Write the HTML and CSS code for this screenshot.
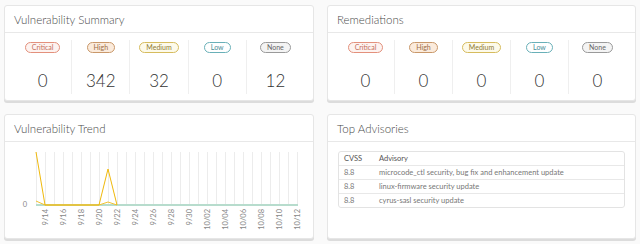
FILE: index.html
```html
<html>
<head>
	<meta http-equiv="content-type" content="text/html;charset=utf-8">
	<title>Dashboard</title>
	<link rel="stylesheet" href="styles.css">
</head>
<body>
	<div class="grid">

		<div class="card">
			<div class="card-header">Vulnerability Summary</div>
			<div class="card-block counts">
				<div class="count"><span class="badge critical">Critical</span><span class="num">0</span></div>
				<div class="count"><span class="badge high">High</span><span class="num">342</span></div>
				<div class="count"><span class="badge medium">Medium</span><span class="num">32</span></div>
				<div class="count"><span class="badge low">Low</span><span class="num">0</span></div>
				<div class="count"><span class="badge none">None</span><span class="num">12</span></div>
			</div>
		</div>

		<div class="card">
			<div class="card-header">Remediations</div>
			<div class="card-block counts">
				<div class="count"><span class="badge critical">Critical</span><span class="num">0</span></div>
				<div class="count"><span class="badge high">High</span><span class="num">0</span></div>
				<div class="count"><span class="badge medium">Medium</span><span class="num">0</span></div>
				<div class="count"><span class="badge low">Low</span><span class="num">0</span></div>
				<div class="count"><span class="badge none">None</span><span class="num">0</span></div>
			</div>
		</div>

		<div class="card">
			<div class="card-header">Vulnerability Trend</div>
			<div class="card-block chart">
				<svg width="308" height="96" viewBox="0 0 308 96" class="trend">
					<g stroke="#ececec" stroke-width="1">
						<line x1="31.5" y1="10" x2="31.5" y2="63"/><line x1="40.5" y1="10" x2="40.5" y2="63"/>
						<line x1="49.5" y1="10" x2="49.5" y2="63"/><line x1="58.5" y1="10" x2="58.5" y2="63"/>
						<line x1="67.5" y1="10" x2="67.5" y2="63"/><line x1="76.5" y1="10" x2="76.5" y2="63"/>
						<line x1="85.5" y1="10" x2="85.5" y2="63"/><line x1="94.5" y1="10" x2="94.5" y2="63"/>
						<line x1="103.5" y1="10" x2="103.5" y2="63"/><line x1="112.5" y1="10" x2="112.5" y2="63"/>
						<line x1="121.5" y1="10" x2="121.5" y2="63"/><line x1="130.5" y1="10" x2="130.5" y2="63"/>
						<line x1="139.5" y1="10" x2="139.5" y2="63"/><line x1="148.5" y1="10" x2="148.5" y2="63"/>
						<line x1="157.5" y1="10" x2="157.5" y2="63"/><line x1="166.5" y1="10" x2="166.5" y2="63"/>
						<line x1="175.5" y1="10" x2="175.5" y2="63"/><line x1="184.5" y1="10" x2="184.5" y2="63"/>
						<line x1="193.5" y1="10" x2="193.5" y2="63"/><line x1="202.5" y1="10" x2="202.5" y2="63"/>
						<line x1="211.5" y1="10" x2="211.5" y2="63"/><line x1="220.5" y1="10" x2="220.5" y2="63"/>
						<line x1="229.5" y1="10" x2="229.5" y2="63"/><line x1="238.5" y1="10" x2="238.5" y2="63"/>
						<line x1="247.5" y1="10" x2="247.5" y2="63"/><line x1="256.5" y1="10" x2="256.5" y2="63"/>
						<line x1="265.5" y1="10" x2="265.5" y2="63"/><line x1="274.5" y1="10" x2="274.5" y2="63"/>
						<line x1="283.5" y1="10" x2="283.5" y2="63"/><line x1="292.5" y1="10" x2="292.5" y2="63"/>
					</g>
					<line x1="31" y1="63" x2="293" y2="63" stroke="#b7dccd" stroke-width="2"/>
					<polyline points="31,59 40,63 94,63 103,60 112,63" fill="none" stroke="#f2c230" stroke-width="1"/>
					<polyline points="31,10 40,63 94,63 103,27 112,63" fill="none" stroke="#f0b90b" stroke-width="1"/>
					<text x="22" y="65" class="axis" text-anchor="end">0</text>
					<g class="axis" text-anchor="end">
						<text transform="translate(43,67) rotate(-90)">9/14</text>
						<text transform="translate(61,67) rotate(-90)">9/16</text>
						<text transform="translate(79,67) rotate(-90)">9/18</text>
						<text transform="translate(97,67) rotate(-90)">9/20</text>
						<text transform="translate(115,67) rotate(-90)">9/22</text>
						<text transform="translate(133,67) rotate(-90)">9/24</text>
						<text transform="translate(151,67) rotate(-90)">9/26</text>
						<text transform="translate(169,67) rotate(-90)">9/28</text>
						<text transform="translate(187,67) rotate(-90)">9/30</text>
						<text transform="translate(205,67) rotate(-90)">10/02</text>
						<text transform="translate(223,67) rotate(-90)">10/04</text>
						<text transform="translate(241,67) rotate(-90)">10/06</text>
						<text transform="translate(259,67) rotate(-90)">10/08</text>
						<text transform="translate(277,67) rotate(-90)">10/10</text>
						<text transform="translate(295,67) rotate(-90)">10/12</text>
					</g>
				</svg>
			</div>
		</div>

		<div class="card">
			<div class="card-header">Top Advisories</div>
			<div class="card-block advisories">
				<table class="datagrid">
					<tr><th class="cvss">CVSS</th><th>Advisory</th></tr>
					<tr><td>8.8</td><td>microcode_ctl security, bug fix and enhancement update</td></tr>
					<tr><td>8.8</td><td>linux-firmware security update</td></tr>
					<tr><td>8.8</td><td>cyrus-sasl security update</td></tr>
				</table>
			</div>
		</div>

	</div>
</body>
</html>
```

FILE: styles.css
```css
body{
	margin:0;
	padding:5px 5px 0 4px;
	background:#fafafa;
	font-family:Lato, "Open Sans", sans-serif;
	color:#565656;
}

.grid{
	display:grid;
	grid-template-columns:310px 309px;
	grid-template-rows:96px 125px;
	column-gap:13px;
	row-gap:13px;
}

.card{
	background:white;
	border:1px solid #e6e6e6;
	border-radius:3px;
	box-shadow:0 2px 0 #dcdcdc;
	display:flex;
	flex-direction:column;
	overflow:hidden;
}
.card-header{
	height:26px;
	line-height:27px;
	padding:0 9px;
	font-size:11.5px;
	font-weight:300;
	color:#4a4a4a;
	border-bottom:1px solid #e8e8e8;
}
.card-block{
	flex:1;
}

/* counts */
.counts{
	display:flex;
	padding:7px 9px 0 9px;
}
.count{
	flex:1;
	height:54px;
	display:flex;
	flex-direction:column;
	align-items:center;
	border-left:1px solid #efefef;
}
.count:first-child{
	border-left:none;
}
.badge{
	display:inline-block;
	height:9px;
	line-height:9px;
	padding:0 6px;
	border:1px solid #999;
	border-radius:6px;
	font-size:7px;
	margin-top:2px;
}
.badge.critical{ border-color:#e3907c; color:#c56f5c; background:#fdf3f0; }
.badge.high{ border-color:#c9986a; color:#9c6d45; background:#fbebdc; }
.badge.medium{ border-color:#d6bc5e; color:#8e7a32; background:#fdfaea; }
.badge.low{ border-color:#69b0b8; color:#4a8e97; background:#fff; }
.badge.none{ border-color:#9a9a9a; color:#666; background:#f4f4f4; }

.num{
	margin-top:18px;
	font-size:17px;
	font-weight:300;
	color:#333;
	line-height:20px;
}

/* chart */
.trend{
	display:block;
}
.trend text{
	font-family:Lato, sans-serif;
	font-size:7.5px;
	fill:#888;
}

/* advisories */
.advisories{
	padding:9px 10px 0 10px;
}
.datagrid{
	width:100%;
	border-collapse:separate;
	border-spacing:0;
	border:1px solid #e3e3e3;
	border-radius:3px;
	font-size:7.5px;
	color:#777;
}
.datagrid th{
	text-align:left;
	font-weight:400;
	color:#555;
	line-height:13px;
	padding:0 5px;
}
.datagrid th.cvss{
	width:25px;
}
.datagrid td{
	line-height:13px;
	padding:0 5px;
	border-top:1px solid #e8e8e8;
}
```
